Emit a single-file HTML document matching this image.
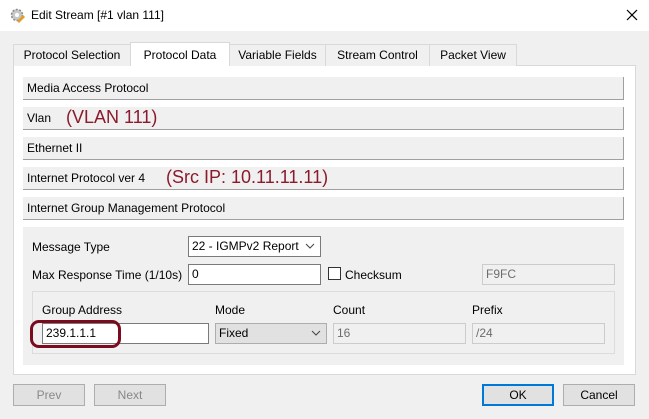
<!DOCTYPE html>
<html><head><style>
*{box-sizing:border-box;margin:0;padding:0}
body{width:649px;height:419px;background:#f0f0f0;font-family:"Liberation Sans",sans-serif;font-size:12px;color:#000;position:relative;overflow:hidden}
.a{position:absolute}
.title{left:0;top:0;width:649px;height:31px;background:#fff}
.tab{position:absolute;top:44px;height:22px;border:1px solid #d9d9d9;border-bottom:none;background:#f0f0f0;text-align:center;line-height:21px;font-size:12px}
.bar{position:absolute;left:23px;width:601px;height:23px;background:#f0f0f0;border-bottom:1px solid #a0a0a0;border-right:1px solid #a0a0a0;line-height:23px;padding-left:4px;font-size:12px}
.red{color:#8b1a2b;font-size:18px;position:absolute;top:-1px}
.inp{position:absolute;height:21px;background:#fff;border:1px solid #7a7a7a;line-height:19px;padding-left:3px}
.dis{background:#f0f0f0;border-color:#ccc;color:#6d6d6d}
.sel{position:absolute;height:21px;border:1px solid #adadad;background:#e1e1e1;line-height:19px;padding-left:3px}
.btn{position:absolute;top:384px;width:72px;height:22px;border:1px solid #adadad;background:#e1e1e1;text-align:center;line-height:20px}
.chev{position:absolute;right:5px;top:4px}
</style></head><body>
<div class="a title"></div>
<svg class="a" style="left:9px;top:7px" width="17" height="17" viewBox="0 0 17 17"><circle cx="8" cy="8" r="5.5" fill="#c8c8c8" stroke="#888" stroke-width="1.5" stroke-dasharray="2 1.5"/><circle cx="8" cy="8" r="2" fill="#fff"/><path d="M9 15L15 9" stroke="#e0a030" stroke-width="3"/></svg>
<div class="a" style="left:31px;top:8px;font-size:12px">Edit Stream [#1 vlan 111]</div>
<svg class="a" style="left:626px;top:9px" width="12" height="12"><path d="M1 1L11 11M11 1L1 11" stroke="#000" stroke-width="1.2"/></svg>
<div class="a" style="left:13px;top:65px;width:623px;height:310px;background:#fff;border:1px solid #d9d9d9"></div>
<div class="tab" style="left:13px;width:118px">Protocol Selection</div>
<div class="tab" style="left:130px;width:100px;top:42px;height:24px;background:#fff;line-height:25px">Protocol Data</div>
<div class="tab" style="left:229px;width:97px">Variable Fields</div>
<div class="tab" style="left:325px;width:105px">Stream Control</div>
<div class="tab" style="left:429px;width:88px">Packet View</div>
<div class="bar" style="top:77px">Media Access Protocol</div>
<div class="bar" style="top:107px">Vlan<span class="red" style="left:43px">(VLAN 111)</span></div>
<div class="bar" style="top:137px">Ethernet II</div>
<div class="bar" style="top:167px">Internet Protocol ver 4<span class="red" style="left:143px">(Src IP: 10.11.11.11)</span></div>
<div class="bar" style="top:197px">Internet Group Management Protocol</div>
<div class="a" style="left:23px;top:227px;width:601px;height:138px;background:#f0f0f0"></div>
<div class="a" style="left:32px;top:240px">Message Type</div>
<div class="sel" style="left:188px;top:236px;width:133px;background:#fff;border-color:#7a7a7a">22 - IGMPv2 Report<svg class="chev" width="10" height="10"><path d="M1 3l4 4 4-4" fill="none" stroke="#444"/></svg></div>
<div class="a" style="left:32px;top:268px">Max Response Time (1/10s)</div>
<div class="inp" style="left:188px;top:264px;width:133px">0</div>
<div class="a" style="left:328px;top:267px;width:13px;height:13px;border:1px solid #333;background:#fff"></div>
<div class="a" style="left:345px;top:268px">Checksum</div>
<div class="inp dis" style="left:482px;top:264px;width:133px">F9FC</div>
<div class="a" style="left:32px;top:291px;width:583px;height:63px;border:1px solid #dcdcdc"></div>
<div class="a" style="left:42px;top:303px">Group Address</div>
<div class="a" style="left:215px;top:303px">Mode</div>
<div class="a" style="left:333px;top:303px">Count</div>
<div class="a" style="left:472px;top:303px">Prefix</div>
<div class="inp" style="left:42px;top:323px;width:167px">239.1.1.1</div>
<div class="sel" style="left:215px;top:323px;width:112px">Fixed<svg class="chev" width="10" height="10"><path d="M1 3l4 4 4-4" fill="none" stroke="#444"/></svg></div>
<div class="inp dis" style="left:333px;top:323px;width:133px">16</div>
<div class="inp dis" style="left:472px;top:323px;width:133px">/24</div>
<div class="a" style="left:30px;top:320px;width:91px;height:28px;border:3px solid #7a0a1e;border-radius:9px"></div>
<div class="btn" style="left:13px;color:#888">Prev</div>
<div class="btn" style="left:94px;color:#888">Next</div>
<div class="btn" style="left:482px;border:2px solid #0078d7;line-height:18px">OK</div>
<div class="btn" style="left:563px">Cancel</div>
</body></html>
